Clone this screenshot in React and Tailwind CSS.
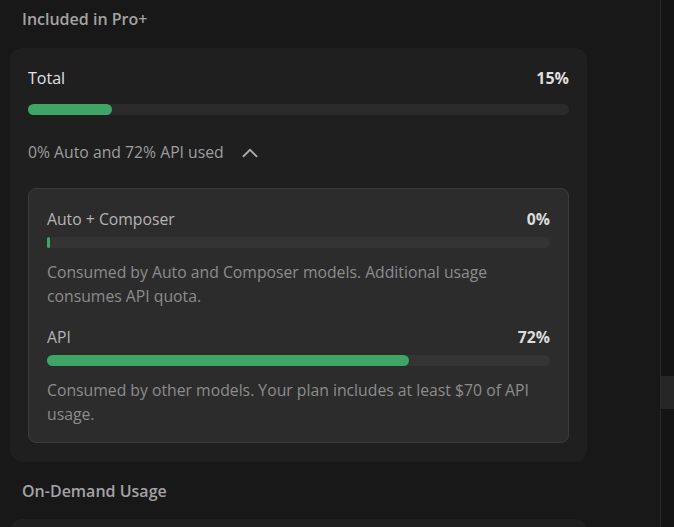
import { ChevronUp } from "lucide-react";

function Bar({ pct, track }) {
  return (
    <div className={`h-[11px] w-full rounded-full ${track}`}>
      <div
        className="h-full rounded-full bg-[#3ea566]"
        style={{ width: `${Math.max(pct, 0.6)}%` }}
      />
    </div>
  );
}

function UsageRow({ label, pct, children }) {
  return (
    <div>
      <div className="flex items-center justify-between h-[22px] text-[15.75px]">
        <span className="text-[#b4b4b4]">{label}</span>
        <span className="font-bold text-[#dcdcdc]">{pct}%</span>
      </div>
      <div className="mt-[6px]">
        <Bar pct={pct} track="bg-[#343434]" />
      </div>
      <p className="mt-[12px] text-[15.75px] leading-[24px] text-[#8c8c8c]">
        {children}
      </p>
    </div>
  );
}

export default function App() {
  return (
    <div
      className="flex h-[527px] w-[674px] overflow-hidden bg-[#181818]"
      style={{ fontFamily: '"Open Sans", "Liberation Sans", Arial, sans-serif' }}
    >
      <div className="w-[660px] pl-[10px] pr-[73px]">
        <h2 className="mt-[8px] pl-[12px] h-[22px] leading-[22px] text-[16px] font-semibold text-[#a3a3a3]">
          Included in Pro+
        </h2>

        <div className="mt-[18px] rounded-[12px] bg-[#1f1f1f] px-[18px] pt-[18px] pb-[19px]">
          <div className="flex items-center justify-between h-[24px] text-[16px]">
            <span className="text-[#e2e2e2]">Total</span>
            <span className="font-bold text-[#dedede]">15%</span>
          </div>
          <div className="mt-[14px]">
            <Bar pct={15.5} track="bg-[#2a2a2a]" />
          </div>

          <div className="mt-[26px] flex items-center h-[24px] text-[15.75px] text-[#9e9e9e]">
            <span>0% Auto and 72% API used</span>
            <ChevronUp className="ml-[13px] h-[26px] w-[26px] text-[#a8a8a8]" strokeWidth={1.7} />
          </div>

          <div className="mt-[23px] rounded-[8px] border border-[#3b3b3b] bg-[#2c2c2c] px-[18px] pt-[20px] pb-[16px]">
            <UsageRow label="Auto + Composer" pct={0}>
              Consumed by Auto and Composer models. Additional usage
              <br />
              consumes API quota.
            </UsageRow>
            <div className="mt-[19px]">
              <UsageRow label="API" pct={72}>
                Consumed by other models. Your plan includes at least $70 of API
                <br />
                usage.
              </UsageRow>
            </div>
          </div>
        </div>

        <h2 className="mt-[18px] pl-[12px] h-[22px] leading-[22px] text-[16px] font-semibold text-[#a3a3a3]">
          On-Demand Usage
        </h2>
        <div className="mt-[17px] h-[40px] rounded-[12px] bg-[#1f1f1f]" />
      </div>

      <div className="w-px bg-[#2a2a2a]" />
      <div className="flex-1 bg-[#141414] pt-[376px]">
        <div className="h-[33px] bg-[#262626]" />
      </div>
    </div>
  );
}
